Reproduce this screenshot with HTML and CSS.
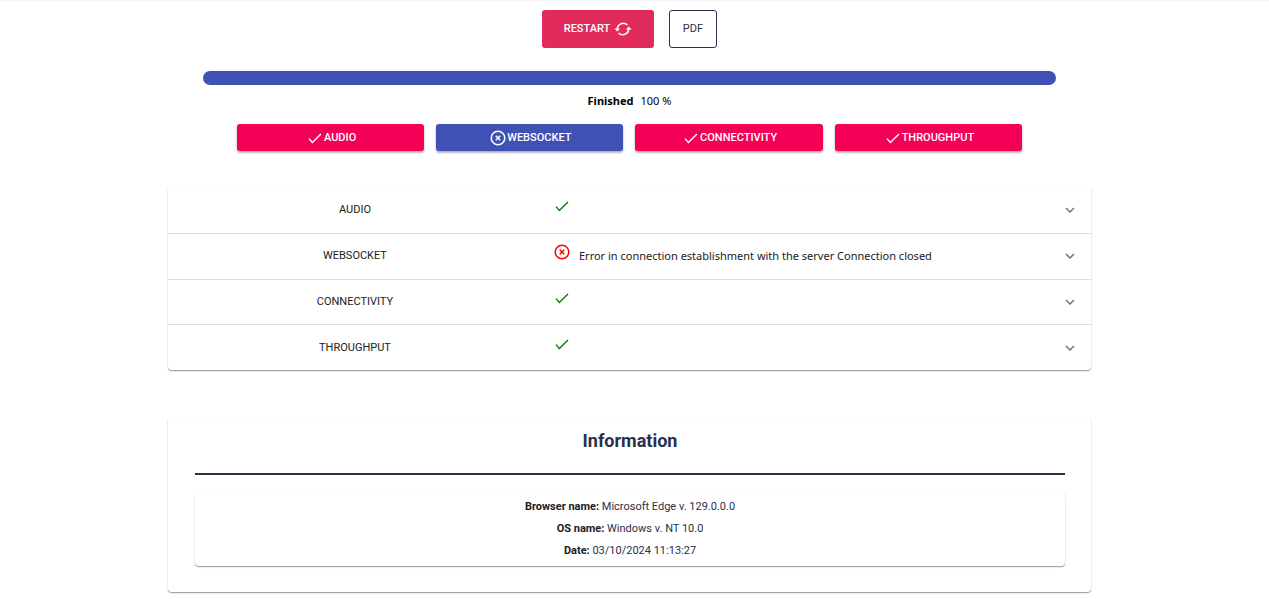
FILE: index.html
```html
<!DOCTYPE html>
<html lang="en">
<head>
<meta charset="utf-8">
<meta name="viewport" content="width=device-width, initial-scale=1">
<title>Connection test</title>
<link rel="stylesheet" href="styles.css">
</head>
<body>
<svg class="sprite" aria-hidden="true">
  <symbol id="check" viewBox="0 0 16 16"><path d="M2 8.6 5.4 12.4 14 4" fill="none" stroke="currentColor" stroke-width="1.4"/></symbol>
  <symbol id="cross" viewBox="0 0 16 16"><circle cx="8" cy="8" r="6.8" fill="none" stroke="currentColor" stroke-width="1.5"/><path d="M5.8 5.8l4.4 4.4M10.2 5.8l-4.4 4.4" fill="none" stroke="currentColor" stroke-width="1.6"/></symbol>
  <symbol id="chevron" viewBox="0 0 24 24"><path d="M16.59 8.59 12 13.17 7.41 8.59 6 10l6 6 6-6z" fill="currentColor"/></symbol>
  <symbol id="refresh" viewBox="0 0 16 16"><path d="M12 4.4A5.4 5.4 0 0 0 2.9 8.6M4 11.6A5.4 5.4 0 0 0 13.1 7.4" fill="none" stroke="currentColor" stroke-width="1.4"/><path d="M0.3 7.6h5.2L2.9 10.2zM10.5 8.4h5.2L13.1 5.8z" fill="currentColor"/></symbol>
</svg>
<main class="page">
  <div class="actions">
    <button class="restart" type="button">RESTART <svg class="icon"><use href="#refresh"/></svg></button>
    <button class="pdf" type="button">PDF</button>
  </div>
  <div class="progress" role="progressbar" aria-label="Test progress" aria-valuenow="100" aria-valuemin="0" aria-valuemax="100"><div class="progress-fill" style="width: 100%"></div></div>
  <p class="status"><strong>Finished</strong><span>100 %</span></p>
  <div class="tests">
    <button class="test" type="button"><svg class="icon"><use href="#check"/></svg>AUDIO</button>
    <button class="test test-failed" type="button"><svg class="icon"><use href="#cross"/></svg>WEBSOCKET</button>
    <button class="test" type="button"><svg class="icon"><use href="#check"/></svg>CONNECTIVITY</button>
    <button class="test" type="button"><svg class="icon"><use href="#check"/></svg>THROUGHPUT</button>
  </div>
  <section class="card results">
    <button class="row" type="button" aria-expanded="false"><span class="name">AUDIO</span><span class="result"><svg class="icon ok"><use href="#check"/></svg></span><svg class="chevron"><use href="#chevron"/></svg></button>
    <button class="row" type="button" aria-expanded="false"><span class="name">WEBSOCKET</span><span class="result"><svg class="icon error"><use href="#cross"/></svg><span class="message">Error in connection establishment with the server Connection closed</span></span><svg class="chevron"><use href="#chevron"/></svg></button>
    <button class="row" type="button" aria-expanded="false"><span class="name">CONNECTIVITY</span><span class="result"><svg class="icon ok"><use href="#check"/></svg></span><svg class="chevron"><use href="#chevron"/></svg></button>
    <button class="row" type="button" aria-expanded="false"><span class="name">THROUGHPUT</span><span class="result"><svg class="icon ok"><use href="#check"/></svg></span><svg class="chevron"><use href="#chevron"/></svg></button>
  </section>
  <section class="card info">
    <h2>Information</h2>
    <div class="card details">
      <p><strong>Browser name:</strong> Microsoft Edge v. 129.0.0.0</p>
      <p><strong>OS name:</strong> Windows v. NT 10.0</p>
      <p><strong>Date:</strong> 03/10/2024 11:13:27</p>
    </div>
  </section>
</main>
</body>
</html>
```
FILE: styles.css
```css
* { box-sizing: border-box; }
body {
  margin: 0;
  border-top: 1px solid #f8f8f8;
  background: #fff;
  color: #212121;
  font: 11px/16px Roboto, sans-serif;
}
button { font: inherit; cursor: pointer; }
p, h2 { margin: 0; }
.sprite { display: none; }
.icon { width: 16px; height: 16px; flex: none; }
.page {
  width: 74%;
  margin-left: 13%;
  padding: 9px 13px 7px 3px;
}
.actions { display: flex; justify-content: center; gap: 15px; }
.restart, .pdf {
  display: flex;
  align-items: center;
  justify-content: center;
  height: 38px;
  border-radius: 3px;
}
.restart {
  width: 112px;
  gap: 4px;
  border: 0;
  padding: 0;
  background: #e12b5b;
  color: #fff;
  font-weight: 500;
}
.restart .icon { width: 18px; height: 18px; }
.pdf {
  width: 48px;
  padding: 0;
  border: 1px solid #2b2f48;
  background: #fff;
  color: #2b2f48;
}
.progress {
  height: 14px;
  margin: 23px 35px 0;
  border-radius: 7px;
  overflow: hidden;
  background: #c5cae9;
}
.progress-fill { height: 100%; background: #3f51b5; }
.status {
  display: flex;
  justify-content: center;
  gap: 7px;
  margin-top: 8px;
  color: #000;
  font: 11px/16px "Noto Sans", sans-serif;
}
.tests {
  display: grid;
  grid-template-columns: repeat(4, 1fr);
  gap: 12px;
  margin: 15px 69px 0;
}
.test {
  display: flex;
  align-items: center;
  justify-content: center;
  gap: 1px;
  height: 27px;
  padding: 0 0 0 2px;
  border: 0;
  border-radius: 3px;
  background: #f50057;
  color: #fff;
  font-weight: 500;
  box-shadow: 0 2px 2px rgba(0, 0, 0, .22), 0 1px 3px rgba(0, 0, 0, .16);
}
.test-failed { background: #3f51b5; }
.card {
  border-radius: 4px;
  background: #fff;
  box-shadow: 0 1px 1px rgba(0, 0, 0, .3), 0 1px 2px rgba(0, 0, 0, .16);
}
.results {
  display: grid;
  grid-auto-rows: 1fr;
  min-height: 183px;
  margin-top: 36px;
}
.row {
  display: grid;
  grid-template-columns: 374px 1fr 18px;
  align-items: center;
  padding: 0 12px 0 0;
  border: 0;
  background: none;
  color: #212121;
  text-align: center;
}
.row + .row { border-top: 1px solid #dcdcdc; }
.result { display: flex; gap: 9px; padding: 0 12px 8px; }
.message { padding-top: 4px; font: 11px/16px "Noto Sans", sans-serif; margin-bottom: -4px; }
.ok { color: #008000; }
.error { color: #f00; }
.chevron { width: 18px; height: 18px; color: #757575; }
.info { margin-top: 47px; padding: 12px 26px 26px 27px; }
.info h2 {
  padding-bottom: 20px;
  border-bottom: 2px solid #2b2f48;
  color: #2b2f48;
  font-size: 18px;
  font-weight: 700;
  line-height: 24px;
  text-align: center;
}
.details {
  margin-top: 17px;
  padding: 4px 0;
  color: #2b2f48;
  line-height: 22px;
  text-align: center;
}
.details strong { color: #212121; }
```
